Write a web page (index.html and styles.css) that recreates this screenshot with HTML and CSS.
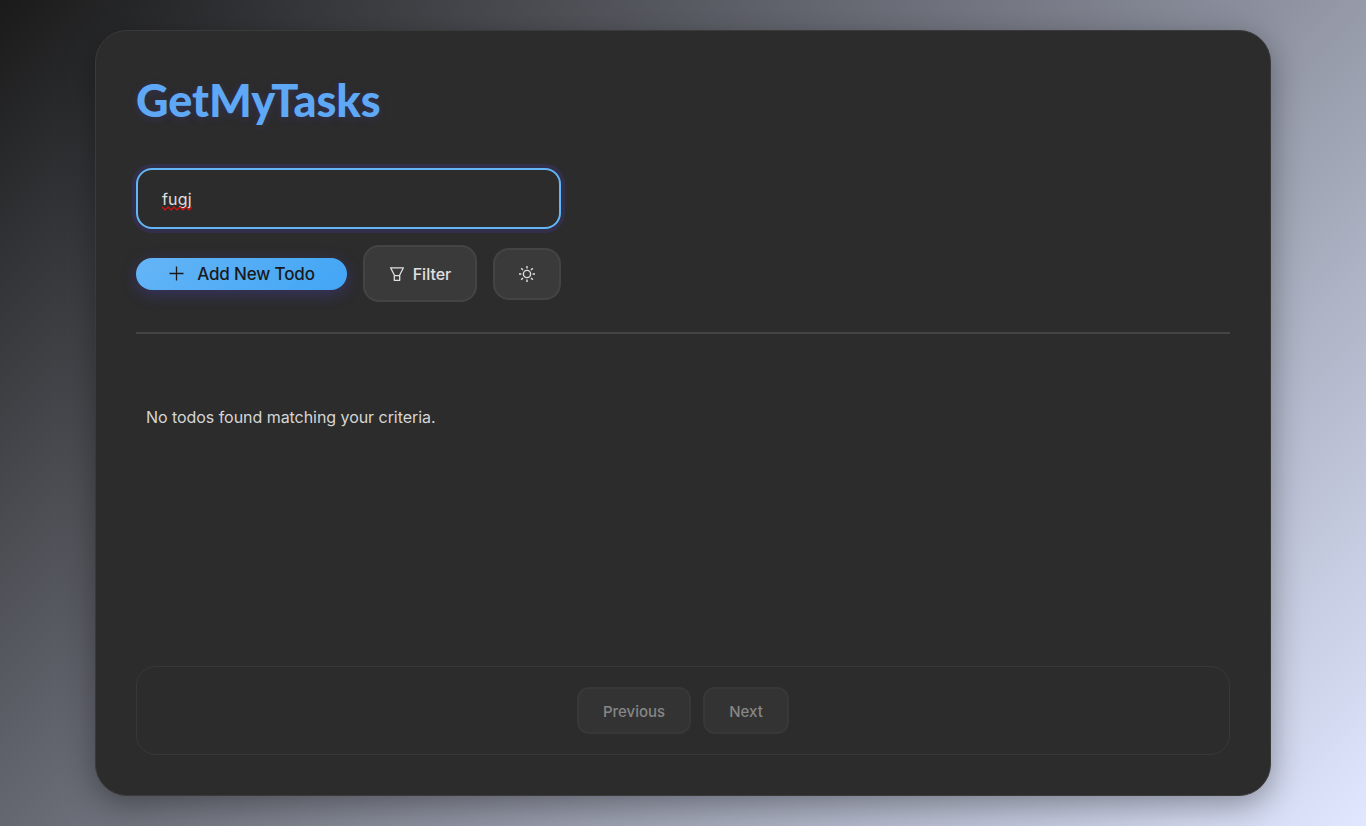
FILE: index.html
```html
<!DOCTYPE html>
<html lang="en">
<head>
<meta charset="utf-8">
<title>GetMyTasks</title>
<link rel="stylesheet" href="styles.css">
</head>
<body>
<main class="card">
  <header class="header">
    <h1 class="title"><span class="title-text">GetMyTasks</span></h1>
    <div class="controls">
      <div class="search" role="textbox"><span class="misspelled">fugj<svg class="squiggle" viewBox="0 0 30 5" width="30" height="5"><path d="M0 1l3 3 3-3 3 3 3-3 3 3 3-3 3 3 3-3 3 3 3-3" fill="none" stroke="#e01010" stroke-width="1.2"/></svg></span></div>
      <div class="actions">
        <button class="btn btn-add">
          <svg class="icon-plus" viewBox="0 0 16 16" width="16" height="16"><path d="M8.5 1.5v14M1.5 8.5h14" fill="none" stroke="currentColor" stroke-width="1.3"/></svg>
          <span class="add-label">Add New Todo</span>
        </button>
        <button class="btn btn-filter">
          <svg viewBox="0 0 16 16" width="16" height="16"><path d="M1.6 1.8h12.8L10.7 9v5.3H5.3V9zM5.3 9.7h5.4" fill="none" stroke="currentColor" stroke-width="1.3" stroke-linejoin="round"/></svg>
          <span class="filter-label">Filter</span>
        </button>
        <button class="btn btn-theme" aria-label="Toggle theme">
          <svg viewBox="0 0 16 16" width="16" height="16"><g fill="none" stroke="currentColor" stroke-width="1.4"><circle cx="8" cy="8" r="3.6"/><path d="M8 0v2.4M8 13.6V16M0 8h2.4M13.6 8H16M2.2 2.2l1.8 1.8M12 12l1.8 1.8M2.2 13.8L4 12M12 4l1.8-1.8"/></g></svg>
        </button>
      </div>
    </div>
  </header>
  <section class="list"><p class="empty">No todos found matching your criteria.</p></section>
  <nav class="pagination">
    <button class="btn page prev" disabled><span class="prev-label">Previous</span></button>
    <button class="btn page next" disabled><span class="next-label">Next</span></button>
  </nav>
</main>
</body>
</html>
```
FILE: styles.css
```css
* { box-sizing: border-box; }
body {
  margin: 0;
  height: 826px;
  padding: 30px 95px;
  overflow: hidden;
  font-family: Inter, "Liberation Sans", sans-serif;
  color: #e0e0e0;
  background: linear-gradient(135deg, #1a1a1a 0%, #e0e7ff 100%);
}
.card {
  display: flex;
  flex-direction: column;
  width: 1176px;
  height: 766px;
  padding: 40px;
  background: #2c2c2c;
  border: 1px solid #3a3a3a;
  border-radius: 32px;
  box-shadow: 0 8px 32px rgba(0, 0, 0, .37);
}
.header {
  height: 263px;
  border-bottom: 2px solid #444;
}
.title {
  height: 97px;
  margin: 0;
  padding-top: 1px;
  font: 900 45px/56px Lato, sans-serif;
  letter-spacing: -.1px;
  color: #5ea8f5;
  text-shadow: 0 2px 8px rgba(80, 70, 229, .22);
}
.title-text, .misspelled, .add-label, .filter-label, .prev-label, .next-label { white-space: nowrap; }
.controls {
  display: flex;
  flex-direction: column;
  gap: 16px;
  width: 425px;
}
.search {
  display: flex;
  align-items: center;
  height: 61px;
  padding-left: 24px;
  border: 2px solid #64b5f6;
  border-radius: 16px;
  box-shadow: 0 0 0 4px rgba(79, 70, 229, .16);
  font-size: 16px;
  letter-spacing: .2px;
}
.misspelled {
  position: relative;
  line-height: 20px;
}
/* Spelling mark drawn over the descenders */
.squiggle {
  position: absolute;
  left: 0;
  bottom: -2px;
}
.actions { display: flex; align-items: center; gap: 16px; }
.btn {
  display: flex;
  align-items: center;
  justify-content: center;
  padding: 0;
  border: 2px solid #444;
  border-radius: 16px;
  background: #3a3a3a;
  color: #e0e0e0;
  font: 450 16px/20px Inter, sans-serif;
}
.btn svg { flex: none; }
.btn-add {
  width: 211px;
  height: 32px;
  gap: 13px;
  border: 0;
  color: #1a1a1a;
  background: linear-gradient(135deg, #64b5f6, #42a5f5);
  box-shadow: 0 4px 16px rgba(79, 70, 229, .3);
  font-size: 17px;
  letter-spacing: -.15px;
}
.icon-plus { margin-top: -2px; }
.btn-filter { width: 114px; height: 57px; gap: 8px; }
.btn-theme { width: 68px; height: 52px; }
.list { flex: 1; padding: 73px 10px 0; }
.empty {
  margin: 0;
  font-size: 16px;
  line-height: 20px;
  letter-spacing: -.05px;
  color: #d6d6d6;
}
.pagination {
  display: flex;
  justify-content: center;
  align-items: center;
  gap: 12px;
  height: 89px;
  border: 1px solid #383838;
  border-radius: 20px;
}
.page {
  height: 47px;
  padding-top: 2px;
  border-color: #383838;
  border-radius: 12px;
  background: #333;
  color: #868686;
  font-size: 15px;
}
.prev { width: 114px; }
.next { width: 86px; }
```
